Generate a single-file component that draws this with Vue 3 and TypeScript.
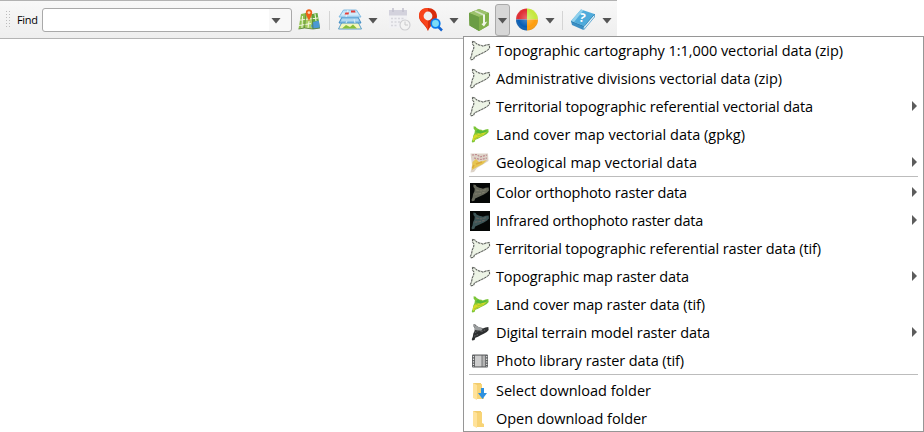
<script setup lang="ts">
import { nextTick, onMounted, ref } from 'vue'

type Icon = 'outline' | 'cover' | 'geo' | 'ortho' | 'infra' | 'dtm' | 'film' | 'select' | 'folder'
interface Item { label: string; icon: Icon; width: number; sub?: boolean }

const groups: Item[][] = [
  [
    { label: 'Topographic cartography 1:1,000 vectorial data (zip)', icon: 'outline', width: 347 },
    { label: 'Administrative divisions vectorial data (zip)', icon: 'outline', width: 286 },
    { label: 'Territorial topographic referential vectorial data', icon: 'outline', width: 317, sub: true },
    { label: 'Land cover map vectorial data (gpkg)', icon: 'cover', width: 249 },
    { label: 'Geological map vectorial data', icon: 'geo', width: 201, sub: true },
  ],
  [
    { label: 'Color orthophoto raster data', icon: 'ortho', width: 191, sub: true },
    { label: 'Infrared orthophoto raster data', icon: 'infra', width: 207, sub: true },
    { label: 'Territorial topographic referential raster data (tif)', icon: 'outline', width: 325 },
    { label: 'Topographic map raster data', icon: 'outline', width: 193, sub: true },
    { label: 'Land cover map raster data (tif)', icon: 'cover', width: 209 },
    { label: 'Digital terrain model raster data', icon: 'dtm', width: 214, sub: true },
    { label: 'Photo library raster data (tif)', icon: 'film', width: 188 },
  ],
  [
    { label: 'Select download folder', icon: 'select', width: 155 },
    { label: 'Open download folder', icon: 'folder', width: 151 },
  ],
]

const region = 'M3.5 1.5 L6 2 L7 3.5 L10 5 L12.5 5.5 L14 6.2 L17 5 L20.3 4.6 L20.6 8 L18.5 10.3 L15 12.3 L11.5 14 L8.5 15.5 L5.5 16.8 L4.6 19.3 L2 19.8 L1.4 18.5 L2.6 15.5 L3.2 12 L4.6 9 L5 6 L3.6 4.2 Z'
const menu = ref<HTMLElement | null>(null)
const query = ref('')

onMounted(async () => {
  await nextTick()
  menu.value?.querySelectorAll<HTMLElement>('.label').forEach((el) => {
    const target = Number(el.dataset.width)
    const count = (el.textContent ?? '').length
    el.style.letterSpacing = `${(target - el.getBoundingClientRect().width) / count}px`
  })
})
</script>

<template>
  <main class="screen">
    <header class="toolbar">
      <svg class="grip" width="6" height="18" viewBox="0 0 6 18">
        <g fill="#bcbcbc">
          <template v-for="n in 6" :key="n">
            <rect x="0" :y="n * 3 - 3" width="1" height="1" />
            <rect x="3" :y="n * 3 - 3" width="1" height="1" />
          </template>
        </g>
      </svg>
      <label class="find" for="find">Find</label>
      <div class="combo">
        <input id="find" v-model="query" type="text" />
        <i class="caret"></i>
      </div>

      <svg class="map-icon" width="24" height="24" viewBox="0 0 24 24">
        <path d="M4 6 L9 5 L7.5 20 L1.5 21Z" fill="#8dbf4c" />
        <path d="M9 5 L15 6 L16 21 L7.5 20Z" fill="#a9d062" />
        <path d="M15 6 L20.5 5 L23 20 L16 21Z" fill="#5fa83a" />
        <path d="M3 12 L21 10 M2 17.5 L14 15.5 M5.5 8 L5 20 M12 13 L11 20 M18 6 L19 13" stroke="#eff4d6" stroke-width="1.1" fill="none" />
        <path d="M16 14 L21.8 12.5 L23 20 L16 21 L14 18Z" fill="#4b99d4" />
        <path d="M9 5 L7.5 20 L1.5 21 M15 6 L16 21 M7.5 20 L16 21 L23 20" fill="none" stroke="#557d32" stroke-width=".8" />
        <path d="M12 14 C11.5 10 8.8 8 8.8 4.5 C8.8 .2 15.2 .2 15.2 4.5 C15.2 8 12.5 10 12 14Z" fill="#ef6018" />
        <circle cx="12" cy="4.6" r="1.4" fill="#f9d9b5" />
      </svg>
      <i class="rule first"></i>
      <svg class="layers-icon" width="26" height="24" viewBox="0 0 26 24">
        <path d="M5 14 L21 14 L24.5 21 L1.5 21Z" fill="#f4f6bd" stroke="#4b94cc" stroke-width=".9" />
        <path d="M5 20.5 L9 17 L13 19 L16 16.5 L20 20.5Z" fill="#86bf3a" />
        <path d="M5 9 L21 9 L24 15 L2 15Z" fill="#8fc3e6" stroke="#3486c2" stroke-width=".9" />
        <path d="M4.5 12 L21.5 12 M10 13 L9 15 M17 11 L18 15" stroke="#d5edfa" />
        <path d="M6.5 2 L19.5 2 L24 9 L2 9Z" fill="#c1e2f7" stroke="#78b6e0" stroke-width=".9" />
        <path d="M5 6 H21 M11 2 L9 9" stroke="#e5f4fc" />
        <path d="M14 2.6 H18 L18.5 4.6 H14Z M8.5 4.4 H12 L11.5 6.6 H7.5Z" fill="#e33d36" />
      </svg>
      <i class="caret c-layers"></i>
      <svg class="calendar-icon" width="22" height="24" viewBox="0 0 22 24">
        <rect x="0" y="2" width="18" height="18" rx="1" fill="#f1f1f4" />
        <path d="M0 2 H18 V7.5 H0Z" fill="#d3d2dd" />
        <path d="M4 0 V4 M14 0 V4" stroke="#c1c0cd" stroke-width="1.5" />
        <path d="M2 10.5 H16 M2 14 H11 M2 17.5 H9" stroke="#d6d6dc" stroke-width="1.7" stroke-dasharray="2 1.5" />
        <circle cx="16" cy="17" r="5" fill="#f3f3f3" stroke="#cdcdd0" stroke-width="1.1" />
        <path d="M16 13.5 V17 H19" fill="none" stroke="#c8c8ca" />
      </svg>
      <svg class="pin-icon" width="26" height="26" viewBox="0 0 26 26">
        <path d="M10 24 C8 18 1 15 1 9.5 C1 -2 19 -2 19 9.5 C19 15 12 18 10 24Z" fill="#d92c0c" />
        <path d="M10 1 C-2 1 .5 12 4 15 C7 18 9 20 10 24Z" fill="#f8431a" />
        <circle cx="10" cy="9" r="4.4" fill="#efefef" />
        <path d="M20 19.5 L24 23.5" stroke="#1464d0" stroke-width="2.5" />
        <circle cx="17.5" cy="16.5" r="4.3" fill="#7bdcf8" stroke="#0879ee" stroke-width="1.7" />
      </svg>
      <i class="caret c-pin"></i>
      <svg class="box-icon" width="22" height="24" viewBox="0 0 22 24">
        <path d="M1 5 L11 1 L21 5 L20.5 17.5 L11 23 L1.5 17.5Z" fill="#76a63d" />
        <path d="M1 5 L11 1 L21 5 L11 9Z" fill="#9cc26c" />
        <path d="M1 5 L11 9 L11 23 L1.5 17.5Z" fill="#6b9d45" />
        <path d="M11 9 L21 5 L20.5 17.5 L11 23Z" fill="#82b14b" />
        <path d="M7 3 L16 7" stroke="#d3e3c2" stroke-width="1.7" fill="none" />
        <path d="M15 7 L17 6.2 V14.3 L19.3 13.5 L16 18.5 L13.4 16 L15 15.2Z" fill="#f0f5e8" />
      </svg>
      <button class="open" type="button" aria-label="Open menu"><i class="caret"></i></button>
      <svg class="ball-icon" width="22" height="24" viewBox="0 0 22 24">
        <defs>
          <radialGradient id="shine" cx=".5" cy=".45" r=".6">
            <stop offset="0" stop-color="#fff" stop-opacity=".3" />
            <stop offset=".65" stop-color="#fff" stop-opacity="0" />
            <stop offset="1" stop-color="#432" stop-opacity=".25" />
          </radialGradient>
        </defs>
        <path d="M11 11.5 V.5 A11 11 0 0 0 0 11.5Z" fill="#e02c32" />
        <path d="M11 11.5 V.5 A11 11 0 0 1 22 11.5Z" fill="#c5e83c" />
        <path d="M11 11.5 H0 A11 11 0 0 0 11 22.5Z" fill="#075db5" />
        <path d="M11 11.5 H22 A11 11 0 0 1 11 22.5Z" fill="#ff9d0b" />
        <circle cx="11" cy="11.5" r="11" fill="url(#shine)" />
      </svg>
      <i class="caret c-ball"></i>
      <i class="rule second"></i>
      <svg class="book-icon" width="26" height="24" viewBox="0 0 26 24">
        <path d="M1 13 L14 18 L13.5 22 L2 17Z" fill="#3c8fc4" />
        <path d="M13.5 18 L24.5 6 L24.5 9 L14 21.5Z" fill="#e2f0f5" stroke="#4b9ccb" stroke-width=".8" />
        <path d="M1 13 L11 1.5 L24.5 6 L14 18Z" fill="#4fabdb" />
        <path d="M1 13 L11 1.5 L13.5 2.3 L4 14Z" fill="#8fd0ec" />
        <path d="M1 13.5 L14 18.5 L24.5 6.2" fill="none" stroke="#2a80b4" stroke-width=".8" />
        <text x="9.5" y="14" transform="rotate(12 13 10)" fill="#fff" font-family="Open Sans, sans-serif" font-size="12" font-weight="700">?</text>
      </svg>
      <i class="caret c-book"></i>
    </header>

    <nav ref="menu" class="menu">
      <ul v-for="(group, index) in groups" :key="index" class="group">
        <li v-for="item in group" :key="item.label" class="item">
          <svg class="item-icon" width="22" height="22" viewBox="0 0 22 22">
            <g v-if="item.icon === 'outline'">
              <path :d="region" fill="#edf4e6" stroke="#d2d5ce" stroke-width="1.4" />
              <path :d="region" fill="none" stroke="#4a4d49" stroke-width=".9" stroke-dasharray="2.3 1" />
            </g>
            <g v-else-if="item.icon === 'cover'">
              <g transform="translate(1.5 1) scale(.88)">
                <path :d="region" fill="#7bc638" />
                <path d="M4.5 11 L10 9 L18 8 L14 12 L6 16 L3 18.5 L2.5 15Z" fill="#d6d928" />
                <path d="M6 8 L8 5 L13 7 L19 5.5 L17 8 L11 10Z" fill="#55b93c" />
                <path d="M6 10 L9 12 L14 11 M4 16 L9 13.5" stroke="#9dc52e" stroke-width="1" fill="none" />
              </g>
            </g>
            <g v-else-if="item.icon === 'geo'">
              <path d="M1.5 1.5 H19 L19.5 9 L13 13 L8 16 L5 20 L1.5 20.5 L3 13Z" fill="#ddd3c8" />
              <path d="M3.5 10 L7 7 L10 10 L18 8 L14 12 L8 15 L3 18Z" fill="#e6c552" />
              <path d="M3 3 L8 2.5 L11 5 L18 3 M5 6 L12 7.5 L18 6" stroke="#bf8a8e" stroke-width="1.2" stroke-dasharray="2 1" fill="none" />
              <path d="M7 12 L13 10 M3.5 16 L5 13" stroke="#dba93c" stroke-width="1.6" />
            </g>
            <g v-else-if="item.icon === 'ortho' || item.icon === 'infra'">
              <rect x="1" y="1" width="20" height="20" fill="#050706" />
              <g transform="translate(1.2 1.2) scale(.91)">
                <path :d="region" :fill="item.icon === 'ortho' ? '#66685a' : '#3d5557'" />
                <path d="M6.5 7.5 L12 8.5 L18 7 M5 12 L10 11.5 L16 10" fill="none" :stroke="item.icon === 'ortho' ? '#83826f' : '#6d6460'" stroke-dasharray="3 1" />
              </g>
            </g>
            <g v-else-if="item.icon === 'dtm'">
              <g transform="translate(1.5 1) scale(.88)">
                <path :d="region" fill="#2c2e2f" />
                <path d="M3.5 1.5 L8 4 L14 6.5 L12 9 L5 8Z" fill="#9b9e9f" />
                <path d="M5 11 L10 8 L12 10 L18 7 M4 15 L9 13" stroke="#5e6061" stroke-width="1.2" stroke-dasharray="2 1" fill="none" />
              </g>
            </g>
            <g v-else-if="item.icon === 'film'">
              <rect x="3" y="4.5" width="16" height="13" rx="1" fill="#5f6163" />
              <rect x="6" y="5.6" width="6.6" height="10.8" fill="#cdcdcd" />
              <rect x="13.4" y="5.6" width="2.8" height="10.8" fill="#b5b5b5" />
              <path d="M4.5 6 V17 M17.7 6 V17" stroke="#e4e4e4" stroke-width="1.2" stroke-dasharray="1.3 1.3" />
            </g>
            <g v-else>
              <path d="M4 3 H12 V17 H4Z" fill="#f2cc6c" />
              <path d="M4 3 L8 5 V20 L4 18Z" fill="#ffe29a" />
              <path d="M8 5 L13 4 V15 L15 16 V19 H8Z" fill="#f8d477" />
              <path v-if="item.icon === 'select'" d="M12 8 H15 V13 H18 L13.5 19 L9 13 H12Z" fill="#2e91df" />
            </g>
          </svg>
          <span class="label" :data-width="item.width">{{ item.label }}</span>
          <i v-if="item.sub" class="arrow"></i>
        </li>
      </ul>
    </nav>
  </main>
</template>

<style>
body { background: #fff; overflow: hidden; }
</style>

<style scoped>
* { box-sizing: border-box; }
.screen { position: relative; width: 924px; height: 432px; overflow: hidden; background: #fff; font-family: "Open Sans", "Noto Sans", sans-serif; color: #000; }
.toolbar { display: flex; align-items: center; width: 617px; height: 39px; padding-top: 1px; padding-left: 6px; border-top: 1px solid #b2b2b2; border-bottom: 1px solid #b4b4b4; background: linear-gradient(#f8f8f8, #eee); }
.toolbar > * { flex-shrink: 0; }
.grip { margin-right: 5px; }
.find { width: 25px; font-size: 11px; letter-spacing: -0.35px; line-height: 20px; }
.combo { display: flex; align-items: center; width: 250px; height: 24px; padding-right: 10px; border: 1px solid #a9a9a9; border-radius: 3px; background: linear-gradient(90deg, #fff 226px, #f8f8f8 226px); }
.combo input { flex: 1; min-width: 0; height: 20px; padding: 0 4px; border: 0; outline: 0; background: transparent; }
.caret { display: block; width: 10px; height: 6px; margin-top: 1px; background: #555; clip-path: polygon(0 0, 100% 0, 50% 100%); }
.map-icon { margin-left: 5px; }
.rule { width: 1px; height: 19px; background: #d4d4d4; }
.first { margin-left: 8px; }
.layers-icon { margin-left: 7px; }
.c-layers { margin-left: 5px; }
.calendar-icon { margin-left: 11px; }
.pin-icon { margin-left: 7px; }
.c-pin { margin-left: 5px; }
.box-icon { margin-left: 9px; }
.open { display: flex; align-items: center; justify-content: center; width: 15px; height: 32px; margin-left: 5px; padding: 0; border: 1px solid #aaa; border-radius: 3px; background: #d7d7d7; }
.ball-icon { margin-left: 6px; }
.c-ball { margin-left: 7px; }
.second { margin-left: 7px; }
.book-icon { margin-left: 7px; }
.c-book { margin-left: 6px; }
.menu { position: absolute; top: 36px; left: 463px; width: 461px; height: 396px; border: 1px solid #969696; background: #fff; overflow: hidden; }
.group { margin: 0; padding: 0; list-style: none; }
.group + .group { position: relative; padding-top: 2px; }
.group + .group::before { content: ""; position: absolute; top: -1px; left: 5px; right: 5px; height: 1px; background: #bcbcbc; }
.item { display: flex; align-items: center; height: 28px; padding: 0 6px 0 5px; }
.item-icon { flex: none; margin-right: 5px; }
.label { font-size: 14.5px; line-height: 20px; white-space: pre; }
.arrow { width: 5px; height: 10px; margin-top: -2px; margin-left: auto; background: #5c5c5c; clip-path: polygon(0 0, 100% 50%, 0 100%); }
</style>
